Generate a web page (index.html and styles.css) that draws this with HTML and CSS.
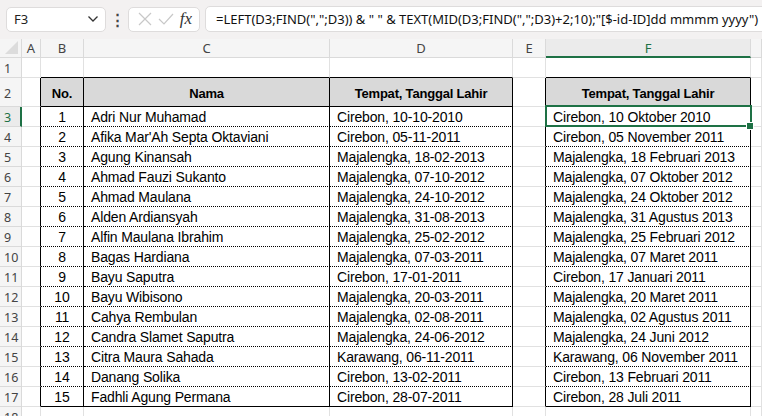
FILE: index.html
```html
<!DOCTYPE html>
<html lang="id">
<head>
    <meta charset="UTF-8">
    <meta name="viewport" content="width=device-width, initial-scale=1.0">
    <title>Tempat, Tanggal Lahir</title>
    <link rel="stylesheet" href="styles.css">
</head>
<body>
    <!-- Formula bar -->
    <div class="toolbar">
        <div class="name-box">
            <span>F3</span>
            <svg class="chevron" width="12" height="8" viewBox="0 0 12 8"><path d="M1.5 1.5 L6 6 L10.5 1.5" fill="none" stroke="#333" stroke-width="1.3"/></svg>
        </div>
        <div class="dots">&#8942;</div>
        <div class="fx-box">
            <svg width="14" height="14" viewBox="0 0 14 14"><path d="M1 1 L13 13 M13 1 L1 13" stroke="#c8c8c8" stroke-width="1.2"/></svg>
            <svg width="16" height="14" viewBox="0 0 16 14"><path d="M1 7 L6 12 L15 2" fill="none" stroke="#c8c8c8" stroke-width="1.2"/></svg>
            <span class="fx">fx</span>
        </div>
        <div class="formula">=LEFT(D3;FIND(",";D3)) &amp; " " &amp; TEXT(MID(D3;FIND(",";D3)+2;10);"[$-id-ID]dd mmmm yyyy")</div>
    </div>

    <!-- Sheet -->
    <div class="sheet">
        <div class="ch corner"></div>
        <div class="ch">A</div>
        <div class="ch">B</div>
        <div class="ch">C</div>
        <div class="ch">D</div>
        <div class="ch">E</div>
        <div class="ch active">F</div>
        <div class="ch"></div>

        <div class="rh">1</div>
        <div class="c"></div>
        <div class="c top"></div>
        <div class="c top"></div>
        <div class="c top"></div>
        <div class="c"></div>
        <div class="c top"></div>
        <div class="c"></div>

        <div class="rh">2</div>
        <div class="c edge"></div>
        <div class="c head">No.</div>
        <div class="c head">Nama</div>
        <div class="c head">Tempat, Tanggal Lahir</div>
        <div class="c edge"></div>
        <div class="c head">Tempat, Tanggal Lahir</div>
        <div class="c"></div>

        <div class="rh active">3</div>
        <div class="c edge"></div>
        <div class="c t num">1</div>
        <div class="c t">Adri Nur Muhamad</div>
        <div class="c t">Cirebon, 10-10-2010</div>
        <div class="c edge"></div>
        <div class="c t selected">Cirebon, 10 Oktober 2010</div>
        <div class="c"></div>

        <div class="rh">4</div>
        <div class="c edge"></div>
        <div class="c t num">2</div>
        <div class="c t">Afika Mar'Ah Septa Oktaviani</div>
        <div class="c t">Cirebon, 05-11-2011</div>
        <div class="c edge"></div>
        <div class="c t">Cirebon, 05 November 2011</div>
        <div class="c"></div>

        <div class="rh">5</div>
        <div class="c edge"></div>
        <div class="c t num">3</div>
        <div class="c t">Agung Kinansah</div>
        <div class="c t">Majalengka, 18-02-2013</div>
        <div class="c edge"></div>
        <div class="c t">Majalengka, 18 Februari 2013</div>
        <div class="c"></div>

        <div class="rh">6</div>
        <div class="c edge"></div>
        <div class="c t num">4</div>
        <div class="c t">Ahmad Fauzi Sukanto</div>
        <div class="c t">Majalengka, 07-10-2012</div>
        <div class="c edge"></div>
        <div class="c t">Majalengka, 07 Oktober 2012</div>
        <div class="c"></div>

        <div class="rh">7</div>
        <div class="c edge"></div>
        <div class="c t num">5</div>
        <div class="c t">Ahmad Maulana</div>
        <div class="c t">Majalengka, 24-10-2012</div>
        <div class="c edge"></div>
        <div class="c t">Majalengka, 24 Oktober 2012</div>
        <div class="c"></div>

        <div class="rh">8</div>
        <div class="c edge"></div>
        <div class="c t num">6</div>
        <div class="c t">Alden Ardiansyah</div>
        <div class="c t">Majalengka, 31-08-2013</div>
        <div class="c edge"></div>
        <div class="c t">Majalengka, 31 Agustus 2013</div>
        <div class="c"></div>

        <div class="rh">9</div>
        <div class="c edge"></div>
        <div class="c t num">7</div>
        <div class="c t">Alfin Maulana Ibrahim</div>
        <div class="c t">Majalengka, 25-02-2012</div>
        <div class="c edge"></div>
        <div class="c t">Majalengka, 25 Februari 2012</div>
        <div class="c"></div>

        <div class="rh">10</div>
        <div class="c edge"></div>
        <div class="c t num">8</div>
        <div class="c t">Bagas Hardiana</div>
        <div class="c t">Majalengka, 07-03-2011</div>
        <div class="c edge"></div>
        <div class="c t">Majalengka, 07 Maret 2011</div>
        <div class="c"></div>

        <div class="rh">11</div>
        <div class="c edge"></div>
        <div class="c t num">9</div>
        <div class="c t">Bayu Saputra</div>
        <div class="c t">Cirebon, 17-01-2011</div>
        <div class="c edge"></div>
        <div class="c t">Cirebon, 17 Januari 2011</div>
        <div class="c"></div>

        <div class="rh">12</div>
        <div class="c edge"></div>
        <div class="c t num">10</div>
        <div class="c t">Bayu Wibisono</div>
        <div class="c t">Majalengka, 20-03-2011</div>
        <div class="c edge"></div>
        <div class="c t">Majalengka, 20 Maret 2011</div>
        <div class="c"></div>

        <div class="rh">13</div>
        <div class="c edge"></div>
        <div class="c t num">11</div>
        <div class="c t">Cahya Rembulan</div>
        <div class="c t">Majalengka, 02-08-2011</div>
        <div class="c edge"></div>
        <div class="c t">Majalengka, 02 Agustus 2011</div>
        <div class="c"></div>

        <div class="rh">14</div>
        <div class="c edge"></div>
        <div class="c t num">12</div>
        <div class="c t">Candra Slamet Saputra</div>
        <div class="c t">Majalengka, 24-06-2012</div>
        <div class="c edge"></div>
        <div class="c t">Majalengka, 24 Juni 2012</div>
        <div class="c"></div>

        <div class="rh">15</div>
        <div class="c edge"></div>
        <div class="c t num">13</div>
        <div class="c t">Citra Maura Sahada</div>
        <div class="c t">Karawang, 06-11-2011</div>
        <div class="c edge"></div>
        <div class="c t">Karawang, 06 November 2011</div>
        <div class="c"></div>

        <div class="rh">16</div>
        <div class="c edge"></div>
        <div class="c t num">14</div>
        <div class="c t">Danang Solika</div>
        <div class="c t">Cirebon, 13-02-2011</div>
        <div class="c edge"></div>
        <div class="c t">Cirebon, 13 Februari 2011</div>
        <div class="c"></div>

        <div class="rh">17</div>
        <div class="c edge"></div>
        <div class="c t last num">15</div>
        <div class="c t last">Fadhli Agung Permana</div>
        <div class="c t last">Cirebon, 28-07-2011</div>
        <div class="c edge"></div>
        <div class="c t last">Cirebon, 28 Juli 2011</div>
        <div class="c"></div>

        <div class="rh">18</div>
        <div class="c"></div>
        <div class="c"></div>
        <div class="c"></div>
        <div class="c"></div>
        <div class="c"></div>
        <div class="c"></div>
        <div class="c"></div>
    </div>
</body>
</html>
```

FILE: styles.css
```css
* {
    box-sizing: border-box;
}

body {
    margin: 0;
    font-family: "Liberation Sans", Arial, sans-serif;
    background: #fff;
    overflow: hidden;
}

/* formula bar */
.toolbar {
    height: 39px;
    background: #f3f1f1;
    display: flex;
    align-items: center;
    padding: 0 0 1px 6px;
    font-family: "Noto Sans", sans-serif;
}

.name-box {
    width: 100px;
    height: 25px;
    background: #fff;
    border: 1px solid #dedcdc;
    border-radius: 5px;
    display: flex;
    align-items: center;
    justify-content: space-between;
    padding: 0 6px 0 7px;
    font-size: 13px;
    color: #222;
}

.dots {
    width: 22px;
    text-align: center;
    font-size: 15px;
    font-weight: bold;
    color: #444;
}

.fx-box {
    width: 72px;
    height: 25px;
    background: #fff;
    border: 1px solid #dedcdc;
    border-radius: 5px;
    display: flex;
    align-items: center;
    justify-content: space-between;
    padding: 0 7px 0 9px;
}

.fx {
    font-family: "Liberation Serif", serif;
    font-style: italic;
    font-size: 17px;
    color: #333;
}

.formula {
    flex: 1;
    height: 26px;
    margin: 0 -10px 0 5px;
    background: #fff;
    border: 1px solid #dedcdc;
    border-radius: 5px;
    padding: 0 0 0 10px;
    display: flex;
    align-items: center;
    font-size: 13px;
    color: #111;
    white-space: nowrap;
}

/* sheet grid */
.sheet {
    display: grid;
    grid-template-columns: 22px 19px 43px 246px 183px 33px 205px 1fr;
    grid-template-rows: 19px 20px 29px repeat(15, 20px) 20px;
}

.ch,
.rh {
    background: #f5f5f5;
    color: #444;
    font-family: "Noto Sans", sans-serif;
    font-size: 13px;
    display: flex;
    align-items: center;
    justify-content: center;
    border-right: 1px solid #dadada;
    border-bottom: 1px solid #dadada;
}

.rh {
    justify-content: flex-start;
    padding-left: 4px;
    padding-top: 2px;
    font-size: 12.5px;
    align-items: center;
}

.corner {
    position: relative;
}

.corner::after {
    content: "";
    position: absolute;
    right: 3px;
    bottom: 3px;
    border-left: 13px solid transparent;
    border-bottom: 13px solid #dcdcdc;
}

.ch.active {
    color: #1e7145;
    border-bottom: 2px solid #1e7145;
    background: #ebebeb;
}

.rh.active {
    color: #1e7145;
    border-right: 2px solid #1e7145;
    background: #ebebeb;
}

.c {
    border-right: 1px solid #e1e1e1;
    border-bottom: 1px solid #e1e1e1;
    font-size: 14px;
    letter-spacing: -0.15px;
    color: #000;
    display: flex;
    align-items: center;
    padding: 0 0 0 7px;
    white-space: nowrap;
}

.c.top {
    border-bottom-color: #000;
}

.c.edge {
    border-right-color: #000;
}

.c.head {
    background: #d9d9d9;
    font-weight: bold;
    font-size: 13px;
    letter-spacing: -0.2px;
    justify-content: center;
    padding: 2px 0 0 0;
    border-right-color: #000;
    border-bottom-color: #000;
}

.c.t {
    border-right-color: #000;
    border-bottom: 1px dotted #000;
    padding-top: 1px;
}

.c.t.last {
    border-bottom: 1px solid #000;
}

.c.num {
    justify-content: center;
    padding-left: 0;
}

.c.selected {
    position: relative;
}

.c.selected::after {
    content: "";
    position: absolute;
    left: -1px;
    top: -2px;
    right: -2px;
    bottom: -1px;
    border: 2px solid #1e7145;
}

.c.selected::before {
    content: "";
    position: absolute;
    right: -4px;
    bottom: -4px;
    width: 6px;
    height: 6px;
    background: #1e7145;
    border: 1px solid #fff;
    z-index: 1;
}
```
